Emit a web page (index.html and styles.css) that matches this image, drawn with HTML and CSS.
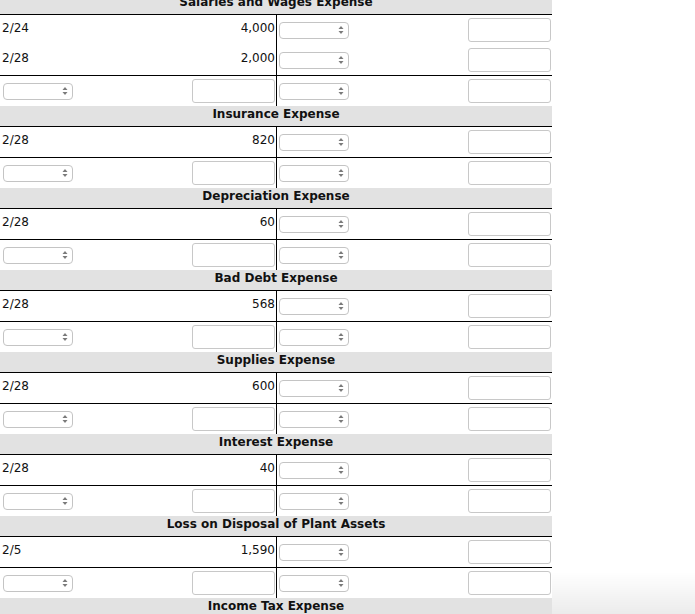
FILE: index.html
```html
<!DOCTYPE html>
<html lang="en">
<head>
<meta charset="utf-8">
<title>Ledger accounts</title>
<link rel="stylesheet" href="styles.css">
</head>
<body>
<div class="ledger">

  <section class="acct">
    <div class="acct-title">Salaries and Wages Expense</div>
    <div class="entries">
      <div class="row">
        <div class="c-date txt">2/24</div>
        <div class="c-amt txt">4,000</div>
        <div class="c-cr"><span class="sel"><svg class="arr" viewBox="0 0 6 10"><polygon points="0.5,4 3,1 5.5,4"/><polygon points="0.5,6 5.5,6 3,9"/></svg></span><span class="box"></span></div>
      </div>
      <div class="row">
        <div class="c-date txt">2/28</div>
        <div class="c-amt txt">2,000</div>
        <div class="c-cr"><span class="sel"><svg class="arr" viewBox="0 0 6 10"><polygon points="0.5,4 3,1 5.5,4"/><polygon points="0.5,6 5.5,6 3,9"/></svg></span><span class="box"></span></div>
      </div>
    </div>
    <div class="row">
      <div class="c-date"><span class="sel sel-left"><svg class="arr" viewBox="0 0 6 10"><polygon points="0.5,4 3,1 5.5,4"/><polygon points="0.5,6 5.5,6 3,9"/></svg></span></div>
      <div class="c-amt c-in"><span class="box"></span></div>
      <div class="c-cr"><span class="sel"><svg class="arr" viewBox="0 0 6 10"><polygon points="0.5,4 3,1 5.5,4"/><polygon points="0.5,6 5.5,6 3,9"/></svg></span><span class="box"></span></div>
    </div>
  </section>

  <section class="acct">
    <div class="acct-title">Insurance Expense</div>
    <div class="entries">
      <div class="row">
        <div class="c-date txt">2/28</div>
        <div class="c-amt txt">820</div>
        <div class="c-cr"><span class="sel"><svg class="arr" viewBox="0 0 6 10"><polygon points="0.5,4 3,1 5.5,4"/><polygon points="0.5,6 5.5,6 3,9"/></svg></span><span class="box"></span></div>
      </div>
    </div>
    <div class="row">
      <div class="c-date"><span class="sel sel-left"><svg class="arr" viewBox="0 0 6 10"><polygon points="0.5,4 3,1 5.5,4"/><polygon points="0.5,6 5.5,6 3,9"/></svg></span></div>
      <div class="c-amt c-in"><span class="box"></span></div>
      <div class="c-cr"><span class="sel"><svg class="arr" viewBox="0 0 6 10"><polygon points="0.5,4 3,1 5.5,4"/><polygon points="0.5,6 5.5,6 3,9"/></svg></span><span class="box"></span></div>
    </div>
  </section>

  <section class="acct">
    <div class="acct-title">Depreciation Expense</div>
    <div class="entries">
      <div class="row">
        <div class="c-date txt">2/28</div>
        <div class="c-amt txt">60</div>
        <div class="c-cr"><span class="sel"><svg class="arr" viewBox="0 0 6 10"><polygon points="0.5,4 3,1 5.5,4"/><polygon points="0.5,6 5.5,6 3,9"/></svg></span><span class="box"></span></div>
      </div>
    </div>
    <div class="row">
      <div class="c-date"><span class="sel sel-left"><svg class="arr" viewBox="0 0 6 10"><polygon points="0.5,4 3,1 5.5,4"/><polygon points="0.5,6 5.5,6 3,9"/></svg></span></div>
      <div class="c-amt c-in"><span class="box"></span></div>
      <div class="c-cr"><span class="sel"><svg class="arr" viewBox="0 0 6 10"><polygon points="0.5,4 3,1 5.5,4"/><polygon points="0.5,6 5.5,6 3,9"/></svg></span><span class="box"></span></div>
    </div>
  </section>

  <section class="acct">
    <div class="acct-title">Bad Debt Expense</div>
    <div class="entries">
      <div class="row">
        <div class="c-date txt">2/28</div>
        <div class="c-amt txt">568</div>
        <div class="c-cr"><span class="sel"><svg class="arr" viewBox="0 0 6 10"><polygon points="0.5,4 3,1 5.5,4"/><polygon points="0.5,6 5.5,6 3,9"/></svg></span><span class="box"></span></div>
      </div>
    </div>
    <div class="row">
      <div class="c-date"><span class="sel sel-left"><svg class="arr" viewBox="0 0 6 10"><polygon points="0.5,4 3,1 5.5,4"/><polygon points="0.5,6 5.5,6 3,9"/></svg></span></div>
      <div class="c-amt c-in"><span class="box"></span></div>
      <div class="c-cr"><span class="sel"><svg class="arr" viewBox="0 0 6 10"><polygon points="0.5,4 3,1 5.5,4"/><polygon points="0.5,6 5.5,6 3,9"/></svg></span><span class="box"></span></div>
    </div>
  </section>

  <section class="acct">
    <div class="acct-title">Supplies Expense</div>
    <div class="entries">
      <div class="row">
        <div class="c-date txt">2/28</div>
        <div class="c-amt txt">600</div>
        <div class="c-cr"><span class="sel"><svg class="arr" viewBox="0 0 6 10"><polygon points="0.5,4 3,1 5.5,4"/><polygon points="0.5,6 5.5,6 3,9"/></svg></span><span class="box"></span></div>
      </div>
    </div>
    <div class="row">
      <div class="c-date"><span class="sel sel-left"><svg class="arr" viewBox="0 0 6 10"><polygon points="0.5,4 3,1 5.5,4"/><polygon points="0.5,6 5.5,6 3,9"/></svg></span></div>
      <div class="c-amt c-in"><span class="box"></span></div>
      <div class="c-cr"><span class="sel"><svg class="arr" viewBox="0 0 6 10"><polygon points="0.5,4 3,1 5.5,4"/><polygon points="0.5,6 5.5,6 3,9"/></svg></span><span class="box"></span></div>
    </div>
  </section>

  <section class="acct">
    <div class="acct-title">Interest Expense</div>
    <div class="entries">
      <div class="row">
        <div class="c-date txt">2/28</div>
        <div class="c-amt txt">40</div>
        <div class="c-cr"><span class="sel"><svg class="arr" viewBox="0 0 6 10"><polygon points="0.5,4 3,1 5.5,4"/><polygon points="0.5,6 5.5,6 3,9"/></svg></span><span class="box"></span></div>
      </div>
    </div>
    <div class="row">
      <div class="c-date"><span class="sel sel-left"><svg class="arr" viewBox="0 0 6 10"><polygon points="0.5,4 3,1 5.5,4"/><polygon points="0.5,6 5.5,6 3,9"/></svg></span></div>
      <div class="c-amt c-in"><span class="box"></span></div>
      <div class="c-cr"><span class="sel"><svg class="arr" viewBox="0 0 6 10"><polygon points="0.5,4 3,1 5.5,4"/><polygon points="0.5,6 5.5,6 3,9"/></svg></span><span class="box"></span></div>
    </div>
  </section>

  <section class="acct">
    <div class="acct-title">Loss on Disposal of Plant Assets</div>
    <div class="entries">
      <div class="row">
        <div class="c-date txt">2/5</div>
        <div class="c-amt txt">1,590</div>
        <div class="c-cr"><span class="sel"><svg class="arr" viewBox="0 0 6 10"><polygon points="0.5,4 3,1 5.5,4"/><polygon points="0.5,6 5.5,6 3,9"/></svg></span><span class="box"></span></div>
      </div>
    </div>
    <div class="row">
      <div class="c-date"><span class="sel sel-left"><svg class="arr" viewBox="0 0 6 10"><polygon points="0.5,4 3,1 5.5,4"/><polygon points="0.5,6 5.5,6 3,9"/></svg></span></div>
      <div class="c-amt c-in"><span class="box"></span></div>
      <div class="c-cr"><span class="sel"><svg class="arr" viewBox="0 0 6 10"><polygon points="0.5,4 3,1 5.5,4"/><polygon points="0.5,6 5.5,6 3,9"/></svg></span><span class="box"></span></div>
    </div>
  </section>

  <section class="acct">
    <div class="acct-title">Income Tax Expense</div>
  </section>

</div>
<div class="shade"></div>
</body>
</html>
```

FILE: styles.css
```css
html, body {
  margin: 0;
  padding: 0;
  background: #fff;
  overflow: hidden;
}

body {
  font-family: "DejaVu Sans", Verdana, sans-serif;
  font-size: 12px;
  color: #111;
}

.ledger {
  width: 552px;
  margin-top: -6px;
}

.acct-title {
  box-sizing: border-box;
  height: 21px;
  line-height: 16px;
  padding-top: 0;
  background: #e2e2e2;
  border-bottom: 1px solid #000;
  text-align: center;
  font-weight: bold;
  white-space: nowrap;
}

.entries {
  border-bottom: 1px solid #000;
}

.row {
  display: grid;
  grid-template-columns: 192px 84px 276px;
  height: 30px;
}

.c-date {
  display: flex;
  align-items: center;
  padding-left: 2px;
}

.c-amt {
  display: flex;
  align-items: center;
  justify-content: flex-end;
  padding-right: 1px;
}

.txt {
  padding-bottom: 4px;
}

.c-amt.c-in {
  justify-content: flex-start;
  padding-right: 0;
}

.c-cr {
  display: flex;
  align-items: center;
  justify-content: space-between;
  border-left: 1px solid #000;
  padding: 0 1px 0 2px;
}

.sel {
  box-sizing: border-box;
  width: 70px;
  height: 17px;
  border: 1px solid #c4c4c4;
  border-radius: 4px;
  background: #fff;
  display: flex;
  align-items: center;
  justify-content: flex-end;
  padding-right: 4px;
}

.sel-left {
  margin-left: 1px;
}

.arr {
  width: 6px;
  height: 10px;
  fill: #7a7a7a;
}

.box {
  box-sizing: border-box;
  width: 83px;
  height: 24px;
  border: 1px solid #c8c8c8;
  border-radius: 3px;
  background: #fff;
}

.shade {
  position: fixed;
  right: 0;
  bottom: 0;
  width: 143px;
  height: 42px;
  background: linear-gradient(to bottom, rgba(0, 0, 0, 0), rgba(0, 0, 0, 0.08));
  pointer-events: none;
}
```
